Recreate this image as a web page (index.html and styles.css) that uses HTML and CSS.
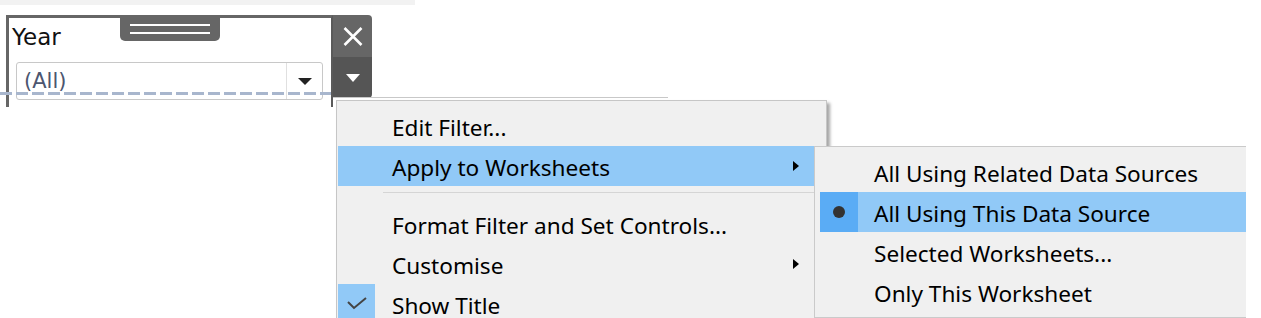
FILE: index.html
```html
<!DOCTYPE html>
<html lang="en">
<head>
<meta charset="utf-8">
<title>Filter menu</title>
<link rel="stylesheet" href="styles.css">
</head>
<body>
<div class="topbar"></div>
<div class="card">
  <div class="card-main">
    <div class="handle"><span></span><span></span></div>
    <div class="title">Year</div>
    <div class="select">
      <span class="value">(All)</span>
      <span class="select-btn"><i class="tri"></i></span>
    </div>
    <div class="dash"></div>
  </div>
  <div class="panel">
    <div class="panel-close">
      <svg width="20" height="19" viewBox="0 0 20 19"><path d="M1.5 1 L18.5 18 M18.5 1 L1.5 18" stroke="#fff" stroke-width="2.6" fill="none"/></svg>
    </div>
    <div class="panel-menu"><i class="tri tri-white"></i></div>
  </div>
</div>
<div class="rule"></div>

<div class="menu">
  <div class="item"><span class="check"></span><span class="label">Edit Filter...</span></div>
  <div class="item hl"><span class="check"></span><span class="label">Apply to Worksheets</span><i class="arrow"></i></div>
  <div class="sep"></div>
  <div class="item"><span class="check"></span><span class="label">Format Filter and Set Controls...</span></div>
  <div class="item"><span class="check"></span><span class="label">Customise</span><i class="arrow"></i></div>
  <div class="item"><span class="check checked"><svg width="20" height="14" viewBox="0 0 20 14"><path d="M1 5 L7 11 L19 1" stroke="#444" stroke-width="2" fill="none"/></svg></span><span class="label">Show Title</span></div>
</div>

<div class="submenu">
  <div class="item"><span class="check"></span><span class="label">All Using Related Data Sources</span></div>
  <div class="item hl"><span class="check checked"><i class="dot"></i></span><span class="label">All Using This Data Source</span></div>
  <div class="item"><span class="check"></span><span class="label">Selected Worksheets...</span></div>
  <div class="item"><span class="check"></span><span class="label">Only This Worksheet</span></div>
</div>
</body>
</html>
```

FILE: styles.css
```css
html, body {
  margin: 0;
  padding: 0;
  height: 318px;
  overflow: hidden;
  background: #fff;
}
body {
  position: relative;
  font-family: "Noto Sans", "Open Sans", sans-serif;
}

.topbar {
  width: 415px;
  height: 5px;
  background: #f2f2f2;
}

.card {
  display: flex;
  align-items: flex-start;
  margin: 10px 0 0 6px;
  width: 366px;
}
.card-main {
  position: relative;
  box-sizing: border-box;
  width: 327px;
  height: 92px;
  border-left: 3px solid #666;
  border-right: 2px solid #5a5a5a;
  border-top: 3px solid #666;
  background: #fff;
}
.handle {
  position: absolute;
  left: 111px;
  top: -3px;
  width: 100px;
  height: 26px;
  background: #666;
  border-radius: 0 0 5px 5px;
  display: flex;
  flex-direction: column;
  align-items: center;
  padding-top: 9px;
  box-sizing: border-box;
  gap: 6px;
}
.handle span {
  display: block;
  width: 80px;
  height: 2px;
  background: #fff;
}
.title {
  padding: 6px 0 0 3px;
  height: 26px;
  font-family: "DejaVu Sans", sans-serif;
  font-size: 23px;
  line-height: 26px;
  color: #111;
}
.select {
  display: flex;
  margin: 12px 0 0 7px;
  width: 307px;
  height: 38px;
  box-sizing: border-box;
  border: 1px solid #c8c8c8;
  border-radius: 3px;
}
.value {
  flex: 1;
  padding-left: 7px;
  font-family: "DejaVu Sans", sans-serif;
  font-size: 21px;
  line-height: 36px;
  color: #4c5670;
}
.select-btn {
  width: 35px;
  border-left: 1px solid #e0e0e0;
  display: flex;
  align-items: center;
  justify-content: center;
}
.tri {
  display: block;
  width: 0;
  height: 0;
  border-left: 7px solid transparent;
  border-right: 7px solid transparent;
  border-top: 7px solid #222;
}
.tri-white {
  border-top: 8px solid #fff;
}
.dash {
  position: absolute;
  left: -9px;
  top: 74px;
  width: 331px;
  height: 3px;
  background: repeating-linear-gradient(90deg, #a8b6cd 0 12px, transparent 12px 16px);
}
.panel {
  width: 39px;
  display: flex;
  flex-direction: column;
}
.panel-close {
  height: 42px;
  background: #666;
  border-top-right-radius: 4px;
  display: flex;
  align-items: center;
  justify-content: center;
}
.panel-menu {
  height: 41px;
  background: #555;
  border-bottom-right-radius: 4px;
  display: flex;
  align-items: center;
  justify-content: center;
}
.rule {
  position: absolute;
  left: 333px;
  top: 97px;
  width: 335px;
  height: 1px;
  background: #c8c8c8;
}

.menu, .submenu {
  position: absolute;
  background: #f0f0f0;
  box-sizing: border-box;
  color: #000;
  font-size: 22.6px;
}
.menu {
  left: 336px;
  top: 100px;
  width: 491px;
  height: 218px;
  overflow: hidden;
  border: 1px solid #c6c6c6;
  border-bottom: none;
  padding: 5px 1px 0;
  box-shadow: 3px 3px 3px rgba(0, 0, 0, 0.35);
}
.submenu {
  left: 814px;
  top: 146px;
  width: 432px;
  height: 172px;
  border: 1px solid #cacaca;
  border-right: none;
  padding: 5px 0 5px 5px;
}
.item {
  display: flex;
  align-items: stretch;
  height: 40px;
  flex: none;
}
.item.hl {
  background: #91c9f7;
}
.check {
  width: 37px;
  flex: none;
  display: flex;
  align-items: center;
  justify-content: center;
}
.submenu .check {
  width: 38px;
}
.check.checked {
  background: #91c9f7;
}
.submenu .check.checked {
  background: #5aacf5;
}
.label {
  padding: 4px 0 0 17px;
  line-height: 35px;
  white-space: nowrap;
}
.submenu .label {
  padding-left: 16px;
}
.arrow {
  margin: 0 26px 0 auto;
  align-self: center;
  width: 0;
  height: 0;
  border-top: 5px solid transparent;
  border-bottom: 5px solid transparent;
  border-left: 6px solid #000;
}
.sep {
  height: 18px;
  position: relative;
}
.sep::before {
  content: "";
  position: absolute;
  left: 45px;
  right: 0;
  top: 6px;
  height: 1px;
  background: #d5d5d5;
}
.dot {
  display: block;
  width: 12px;
  height: 12px;
  border-radius: 50%;
  background: #333;
}
```
